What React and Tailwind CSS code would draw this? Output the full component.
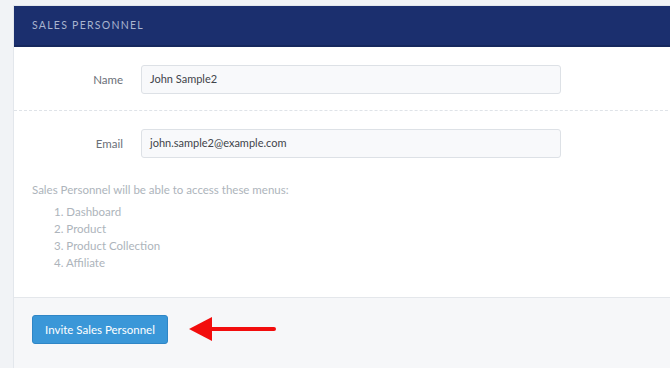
export default function App() {
    const menus = ['Dashboard', 'Product', 'Product Collection', 'Affiliate'];

    return (
        <div
            className="w-[670px] h-[368px] overflow-hidden bg-[#f1f3f6] pt-[5px] pl-[13px]"
            style={{ fontFamily: '"Lato", "Open Sans", sans-serif' }}
        >
            <div className="w-[680px] h-[380px] bg-white border-l border-t border-[#e3e7ec] flex flex-col">
                {/* Header */}
                <div className="h-[41px] bg-[#1b2f6e] border-b-2 border-[#16285e] flex items-center pl-[18px]">
                    <h3 className="text-[10.5px] tracking-[0.12em] text-[#a9b4cf] uppercase">Sales Personnel</h3>
                </div>

                {/* Name row */}
                <div className="flex items-center pt-[18px] pb-[16px] border-b border-dashed border-[#dfe3e8]">
                    <label className="w-[109px] text-right text-[11.5px] text-[#6b7078]">Name</label>
                    <div className="ml-[18px] w-[420px] h-[29px] bg-[#f8f9fb] border border-[#dde1e6] rounded-[3px] flex items-center pl-[8px] text-[11px] text-[#3f444a]">
                        John Sample2
                    </div>
                </div>

                {/* Email row */}
                <div className="flex items-center pt-[18px]">
                    <label className="w-[109px] text-right text-[11.5px] text-[#6b7078]">Email</label>
                    <div className="ml-[18px] w-[420px] h-[29px] bg-[#f8f9fb] border border-[#dde1e6] rounded-[3px] flex items-center pl-[8px] text-[11px] text-[#3f444a]">
                        john.sample2@example.com
                    </div>
                </div>

                {/* Access info */}
                <div className="pl-[18px] pt-[23px] text-[11.5px] text-[#adb4bb]">
                    <p>Sales Personnel will be able to access these menus:</p>
                    <ol className="mt-[5px] pl-[22px] leading-[17px]">
                        {menus.map((m, i) => (
                            <li key={m}>{i + 1}. {m}</li>
                        ))}
                    </ol>
                </div>

                {/* Footer */}
                <div className="mt-[26px] flex-1 bg-[#f6f7f9] border-t border-[#e4e7eb] pl-[18px] pt-[17px] flex items-start">
                    <button className="h-[29px] w-[136px] bg-[#3a97d8] border border-[#2f86c6] rounded-[3px] text-white text-[11.5px]">
                        Invite Sales Personnel
                    </button>
                    <svg width="90" height="28" viewBox="0 0 90 28" className="ml-[20px]">
                        <line x1="20" y1="14" x2="86" y2="14" stroke="#f20d0d" strokeWidth="4" strokeLinecap="round" />
                        <polygon points="1,14 24,2 24,26" fill="#f20d0d" />
                    </svg>
                </div>
            </div>
        </div>
    );
}
